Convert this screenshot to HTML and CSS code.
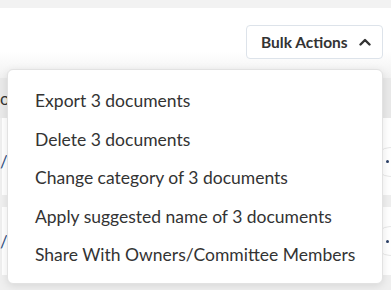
FILE: index.html
```html
<!DOCTYPE html>
<html>
<head>
<meta charset="utf-8">
<link rel="stylesheet" href="styles.css">
</head>
<body>
<div class="topbar"></div>
<div class="toolbar">
  <button class="bulk-btn">
    <span>Bulk Actions</span>
    <svg class="chev" width="12" height="8" viewBox="0 0 12 8"><polyline points="1.5,6.5 6,2 10.5,6.5" fill="none" stroke="#333" stroke-width="2.4" stroke-linecap="round" stroke-linejoin="round"/></svg>
  </button>
</div>
<div class="table">
  <div class="thead"><span class="cell">o</span></div>
  <div class="row first"><span class="cell link">/2023</span><span class="more"><span class="dot"></span></span></div>
  <div class="row"><span class="cell link">/2023</span><span class="more"><span class="dot"></span></span></div>
</div>
<ul class="menu">
  <li>Export 3 documents</li>
  <li>Delete 3 documents</li>
  <li>Change category of 3 documents</li>
  <li>Apply suggested name of 3 documents</li>
  <li>Share With Owners/Committee Members</li>
</ul>
</body>
</html>
```
FILE: styles.css
```css
html, body {
  margin: 0;
  padding: 0;
  background: #fff;
  font-family: Lato, "Liberation Sans", sans-serif;
  color: #333;
  overflow: hidden;
  height: 290px;
}
.topbar {
  height: 8px;
  background: #f2f2f2;
}
.toolbar {
  height: 70px;
  display: flex;
  justify-content: flex-end;
  align-items: flex-start;
  padding: 17px 8px 0 0;
  box-sizing: border-box;
  background: linear-gradient(to bottom, #fff 0, #fff 62%, #f1f1f1 100%);
}
.bulk-btn {
  height: 34px;
  width: 137px;
  border: 1px solid #dde3ea;
  border-radius: 4px;
  background: #fff;
  display: flex;
  align-items: center;
  justify-content: flex-start;
  padding: 0 0 0 14px;
  gap: 11px;
  font-family: Lato, "Liberation Sans", sans-serif;
  font-weight: 700;
  font-size: 15.5px;
  color: #333;
  box-sizing: border-box;
}
.chev { display: block; }
.table {
  background: #efefef;
  display: flex;
  flex-direction: column;
  gap: 12px;
  height: 212px;
}
.thead {
  height: 40px;
  background: #e9e9e9;
  display: flex;
  align-items: center;
  font-size: 17px;
  color: #333;
  margin-bottom: -12px;
}
.row {
  height: 68px;
  background: #fff;
  display: flex;
  align-items: center;
  justify-content: space-between;
  margin-left: 2px;
  font-size: 17px;
}
.row.first {
  height: 77px;
  padding-top: 10px;
  box-sizing: border-box;
}
.cell {
  margin-left: 0;
  white-space: nowrap;
}
.row .cell { margin-left: -2px; }
.link { color: #2f4f7f; }
.more {
  width: 30px;
  height: 30px;
  border: 1px solid #e8e8e8;
  border-radius: 50%;
  margin-right: -14px;
  display: flex;
  align-items: center;
  padding-left: 10px;
  box-sizing: border-box;
}
.dot {
  width: 3px;
  height: 3px;
  border-radius: 50%;
  background: #2b3f66;
}
.menu {
  position: absolute;
  left: 7px;
  top: 69px;
  width: 376px;
  height: 215px;
  box-sizing: border-box;
  margin: 0;
  padding: 12px 0 0 27px;
  list-style: none;
  background: #fff;
  border: 1px solid #e2e2e2;
  border-radius: 6px;
  box-shadow: 0 2px 8px rgba(0,0,0,0.1);
}
.menu li {
  height: 38.5px;
  line-height: 38.5px;
  font-size: 17.5px;
  color: #333;
  white-space: nowrap;
}
```
